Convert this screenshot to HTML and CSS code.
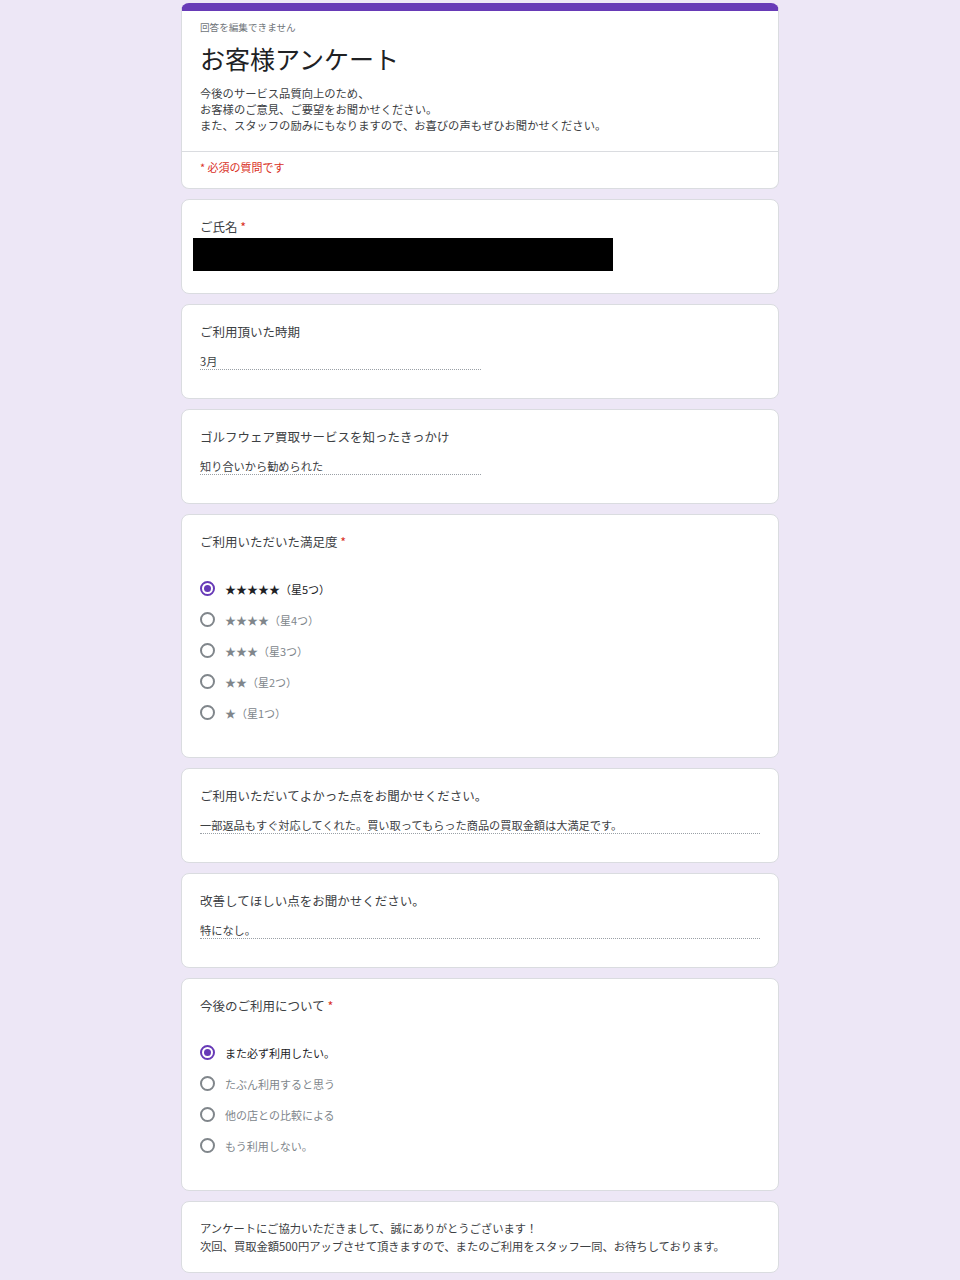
FILE: index.html
```html
<!DOCTYPE html>
<html lang="ja">
<head>
    <meta charset="UTF-8">
    <meta name="viewport" content="width=device-width, initial-scale=1.0">
    <title>お客様アンケート</title>
    <link rel="stylesheet" href="styles.css">
</head>
<body>
    <div class="form">
        <div class="card header-card">
            <div class="header-main">
                <div class="notice">回答を編集できません</div>
                <h1 class="form-title">お客様アンケート</h1>
                <div class="form-desc">
                    今後のサービス品質向上のため、<br>
                    お客様のご意見、ご要望をお聞かせください。<br>
                    また、スタッフの励みにもなりますので、お喜びの声もぜひお聞かせください。
                </div>
            </div>
            <div class="required-note">* 必須の質問です</div>
        </div>

        <div class="card name-card">
            <div class="q-label">ご氏名 <span class="req">*</span></div>
            <div class="redacted"></div>
        </div>

        <div class="card">
            <div class="q-label">ご利用頂いた時期</div>
            <div class="answer short">3月</div>
        </div>

        <div class="card">
            <div class="q-label">ゴルフウェア買取サービスを知ったきっかけ</div>
            <div class="answer short">知り合いから勧められた</div>
        </div>

        <div class="card radio-card">
            <div class="q-label">ご利用いただいた満足度 <span class="req">*</span></div>
            <div class="options">
                <div class="option checked"><span class="radio"></span><span class="opt-text">★★★★★（星5つ）</span></div>
                <div class="option"><span class="radio"></span><span class="opt-text">★★★★（星4つ）</span></div>
                <div class="option"><span class="radio"></span><span class="opt-text">★★★（星3つ）</span></div>
                <div class="option"><span class="radio"></span><span class="opt-text">★★（星2つ）</span></div>
                <div class="option"><span class="radio"></span><span class="opt-text">★（星1つ）</span></div>
            </div>
        </div>

        <div class="card">
            <div class="q-label">ご利用いただいてよかった点をお聞かせください。</div>
            <div class="answer">一部返品もすぐ対応してくれた。買い取ってもらった商品の買取金額は大満足です。</div>
        </div>

        <div class="card">
            <div class="q-label">改善してほしい点をお聞かせください。</div>
            <div class="answer">特になし。</div>
        </div>

        <div class="card radio-card">
            <div class="q-label">今後のご利用について <span class="req">*</span></div>
            <div class="options">
                <div class="option checked"><span class="radio"></span><span class="opt-text">また必ず利用したい。</span></div>
                <div class="option"><span class="radio"></span><span class="opt-text">たぶん利用すると思う</span></div>
                <div class="option"><span class="radio"></span><span class="opt-text">他の店との比較による</span></div>
                <div class="option"><span class="radio"></span><span class="opt-text">もう利用しない。</span></div>
            </div>
        </div>

        <div class="card thanks-card">
            アンケートにご協力いただきまして、誠にありがとうございます！<br>
            次回、買取金額500円アップさせて頂きますので、またのご利用をスタッフ一同、お待ちしております。
        </div>
    </div>
</body>
</html>
```

FILE: styles.css
```css
* {
    margin: 0;
    padding: 0;
    box-sizing: border-box;
}

body {
    font-family: "Noto Sans CJK JP", "Noto Sans", sans-serif;
    background: #ede7f6;
    color: #202124;
    min-height: 100vh;
}

.form {
    width: 598px;
    margin: 0 auto;
    padding-top: 3px;
    display: flex;
    flex-direction: column;
    gap: 10px;
}

.card {
    background: white;
    border: 1px solid #dadce0;
    border-radius: 8px;
    padding: 18px 18px 28px;
}

/* header */
.header-card {
    border-top: 8px solid #673ab7;
    padding: 0;
}

.header-main {
    padding: 9px 18px 18px;
    border-bottom: 1px solid #dadce0;
}

.notice {
    font-size: 9.6px;
    line-height: 14px;
    color: #70757a;
}

.form-title {
    font-size: 25px;
    font-weight: 400;
    line-height: 32px;
    margin-top: 8px;
    color: #202124;
}

.form-desc {
    font-size: 11.3px;
    line-height: 16px;
    margin-top: 11px;
    color: #3c4043;
}

.required-note {
    padding: 7px 18px 13px;
    font-size: 11px;
    line-height: 16px;
    color: #d93025;
}

/* questions */
.q-label {
    font-size: 12.5px;
    line-height: 18px;
    color: #3c4043;
}

.req {
    color: #d93025;
}

.name-card {
    padding-bottom: 22px;
}

.redacted {
    background: black;
    width: 420px;
    height: 33px;
    margin: 2px 0 0 -7px;
}

.answer {
    margin-top: 12px;
    font-size: 11.2px;
    line-height: 16px;
    color: #3c4043;
    border-bottom: 1px dotted #9aa0a6;
}

.answer.short {
    width: 281px;
}

.radio-card {
    padding-bottom: 29px;
}

.options {
    margin-top: 22px;
}

.option {
    display: flex;
    align-items: center;
    height: 31px;
    gap: 10px;
}

.radio {
    width: 15px;
    height: 15px;
    border: 2px solid #80868b;
    border-radius: 50%;
    display: flex;
    align-items: center;
    justify-content: center;
}

.option.checked .radio {
    border-color: #673ab7;
}

.option.checked .radio::after {
    content: "";
    width: 7px;
    height: 7px;
    border-radius: 50%;
    background: #673ab7;
}

.opt-text {
    font-size: 11px;
    line-height: 16px;
    color: #80868b;
}

.option.checked .opt-text {
    color: #202124;
}

.thanks-card {
    font-size: 11.3px;
    line-height: 18px;
    color: #3c4043;
    padding: 17px 18px 17px;
}
```
